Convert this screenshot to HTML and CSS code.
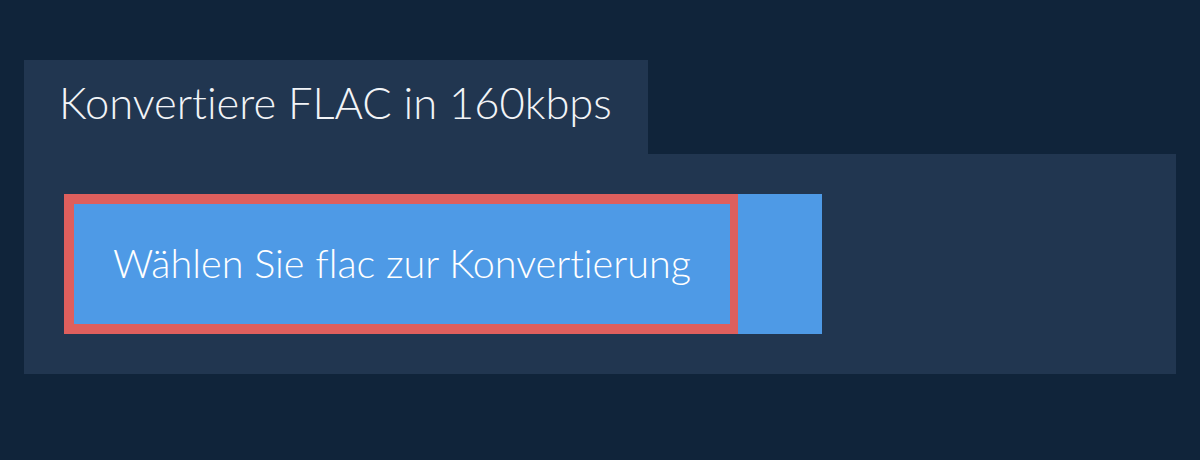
FILE: index.html
```html
<!DOCTYPE html>
<html lang="de">
<head>
  <meta charset="UTF-8" />
  <title>Konvertiere FLAC in 160kbps</title>
  <link rel="stylesheet" href="styles.css">
</head>
<body>
  <div class="converter">
    <h1 class="tab">Konvertiere FLAC in 160kbps</h1>
    <div class="panel">
      <button class="pick">
        <span class="pick-label">Wählen Sie flac zur Konvertierung</span>
      </button>
    </div>
  </div>
</body>
</html>
```

FILE: styles.css
```css
body {
  margin: 0;
  background-color: #10243a;
  font-family: Lato, "Open Sans", sans-serif;
  padding: 60px 24px;
}

.converter {
  display: flex;
  flex-direction: column;
  align-items: flex-start;
}

.tab {
  margin: 0;
  width: 624px;
  height: 94px;
  box-sizing: border-box;
  padding: 15px 0 0 35px;
  background-color: #213650;
  color: #f2f4f7;
  font-size: 43.5px;
  font-weight: 300;
  line-height: 54px;
  font-variant-ligatures: no-common-ligatures;
}

.panel {
  align-self: stretch;
  background-color: #213650;
  padding: 40px;
}

.pick {
  display: flex;
  width: 758px;
  height: 140px;
  padding: 0;
  border: none;
  background-color: #4e9ae6;
  cursor: pointer;
}

.pick-label {
  display: flex;
  align-items: center;
  justify-content: center;
  width: 674px;
  height: 140px;
  box-sizing: border-box;
  border: 10px solid #de5f5d;
  border-right-width: 8px;
  color: #ffffff;
  font-family: Lato, "Open Sans", sans-serif;
  font-size: 39.6px;
  font-weight: 300;
  font-variant-ligatures: no-common-ligatures;
  padding-bottom: 4px;
}
```
